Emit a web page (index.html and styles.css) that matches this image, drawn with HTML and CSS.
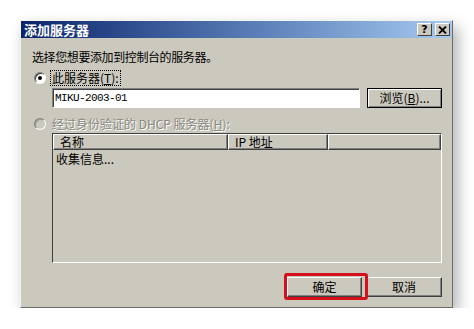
FILE: index.html
```html
<!DOCTYPE html>
<html lang="zh-CN">

<head>
    <meta charset="UTF-8">
    <title>添加服务器</title>
    <link rel="stylesheet" href="styles.css">
</head>

<body>

    <div class="dialog">
        <div class="titlebar">
            <span class="title">添加服务器</span>
            <div class="caption-buttons">
                <span class="cap-btn">?</span>
                <span class="cap-btn">
                    <svg width="9" height="8" viewBox="0 0 9 8">
                        <path d="M1 0.5 L8 7.5 M8 0.5 L1 7.5" stroke="#000" stroke-width="1.8" fill="none"/>
                    </svg>
                </span>
            </div>
        </div>

        <div class="body">
            <p class="intro">选择您想要添加到控制台的服务器。</p>

            <div class="option">
                <span class="radio checked"></span>
                <span class="focus-label">此服务器(<u>T</u>):</span>
            </div>

            <div class="input-row">
                <div class="textbox">MIKU-2003-01</div>
                <button class="btn browse">浏览(<u>B</u>)...</button>
            </div>

            <div class="option">
                <span class="radio disabled"></span>
                <span class="label-disabled">经过身份验证的 DHCP 服务器(<u>H</u>):</span>
            </div>

            <div class="listview">
                <div class="list-header">
                    <span class="col col-name">名称</span>
                    <span class="col col-ip">IP 地址</span>
                    <span class="col col-rest"></span>
                </div>
                <div class="list-row">收集信息...</div>
            </div>

            <div class="actions">
                <div class="ok-wrap">
                    <button class="btn">确定</button>
                    <span class="highlight"></span>
                </div>
                <button class="btn cancel">取消</button>
            </div>
        </div>
    </div>

</body>

</html>
```

FILE: styles.css
```css
body {
    margin: 0;
    padding: 0;
    background-color: #fff;
    font-family: "Noto Sans CJK SC", "DejaVu Sans", sans-serif;
    font-size: 12px;
    color: #000;
}

.dialog {
    box-sizing: border-box;
    width: 433px;
    height: 288px;
    margin: 20px 0 0 20px;
    background-color: #cbc8bd;
    border: 1px solid;
    border-color: #f4f3ee #6c6c6c #6c6c6c #f4f3ee;
    box-shadow: 5px 7px 14px rgba(0, 0, 0, 0.3);
    display: flex;
    flex-direction: column;
}

/* title bar */
.titlebar {
    height: 17px;
    display: flex;
    align-items: center;
    justify-content: space-between;
    padding-left: 3px;
    padding-right: 2px;
    background: linear-gradient(to right, #0a246a, #5a7fb8 55%, #a6caf0);
}

.title {
    color: #fff;
    font-weight: bold;
    font-size: 13px;
    line-height: 17px;
}

.caption-buttons {
    display: flex;
    gap: 3px;
}

.cap-btn {
    box-sizing: border-box;
    width: 15px;
    height: 13px;
    display: flex;
    align-items: center;
    justify-content: center;
    background-color: #cbc8bd;
    border: 1px solid;
    border-color: #fff #404040 #404040 #fff;
    font-family: "DejaVu Sans", sans-serif;
    font-weight: bold;
    font-size: 11px;
    line-height: 11px;
}

/* content */
.body {
    flex: 1;
    display: flex;
    flex-direction: column;
    padding: 12px 10px 0 11px;
}

.intro {
    margin: 0;
    line-height: 14px;
    letter-spacing: -0.4px;
}

.option {
    display: flex;
    align-items: center;
    height: 16px;
    margin-top: 6px;
}

.option + .input-row + .option {
    margin-top: 8px;
}

.radio {
    box-sizing: border-box;
    width: 12px;
    height: 12px;
    margin-left: 2px;
    margin-right: 4px;
    border-radius: 50%;
    border: 1px solid;
    border-color: #808080 #fff #fff #808080;
    background-color: #fff;
    box-shadow: inset 1px 1px 0 #303030;
    display: flex;
    align-items: center;
    justify-content: center;
}

.radio.checked::after {
    content: "";
    width: 4px;
    height: 4px;
    border-radius: 50%;
    background-color: #000;
}

.radio.disabled {
    background-color: #cbc8bd;
    box-shadow: inset 1px 1px 0 #9a9890;
}

.focus-label {
    border: 1px dotted #000;
    padding: 0 1px;
    line-height: 14px;
}

.label-disabled {
    color: #8a8880;
    text-shadow: 1px 1px 0 #fff;
    line-height: 14px;
    padding-left: 2px;
}

.input-row {
    display: flex;
    margin-top: 2px;
    margin-left: 20px;
    gap: 7px;
}

.textbox {
    box-sizing: border-box;
    width: 308px;
    height: 20px;
    background-color: #fff;
    border: 1px solid;
    border-color: #808080 #fff #fff #808080;
    box-shadow: inset 1px 1px 0 #404040;
    padding-left: 2px;
    font-family: "Liberation Mono", monospace;
    font-size: 11px;
    letter-spacing: -0.6px;
    line-height: 18px;
}

.btn {
    box-sizing: border-box;
    width: 75px;
    height: 20px;
    padding: 0;
    background-color: #cbc8bd;
    border: 1px solid;
    border-color: #fff #404040 #404040 #fff;
    box-shadow: inset -1px -1px 0 #808080;
    font-family: "Noto Sans CJK SC", sans-serif;
    font-size: 12px;
    line-height: 16px;
    color: #000;
}

.btn.browse {
    border-color: #000;
    box-shadow: inset 1px 1px 0 #fff, inset -1px -1px 0 #808080;
}

/* list view */
.listview {
    box-sizing: border-box;
    margin-top: 1px;
    margin-left: 20px;
    width: 390px;
    height: 130px;
    border: 1px solid;
    border-color: #404040 #fff #fff #404040;
}

.list-header {
    display: flex;
    height: 16px;
}

.col {
    box-sizing: border-box;
    height: 16px;
    border: 1px solid;
    border-color: #fff #404040 #404040 #fff;
    box-shadow: inset -1px -1px 0 #808080;
    padding-left: 6px;
    line-height: 14px;
}

.col-name {
    width: 175px;
}

.col-ip {
    width: 100px;
}

.col-rest {
    flex: 1;
}

.list-row {
    padding-left: 3px;
    padding-top: 2px;
    line-height: 14px;
}

/* bottom buttons */
.actions {
    display: flex;
    justify-content: flex-end;
    gap: 4px;
    margin-top: 14px;
}

.ok-wrap {
    position: relative;
}

.btn.cancel {
    width: 76px;
}

.highlight {
    position: absolute;
    left: -3px;
    top: -4px;
    width: 84px;
    height: 27px;
    box-sizing: border-box;
    border: 3px solid #d3101c;
    border-radius: 3px;
}
```
